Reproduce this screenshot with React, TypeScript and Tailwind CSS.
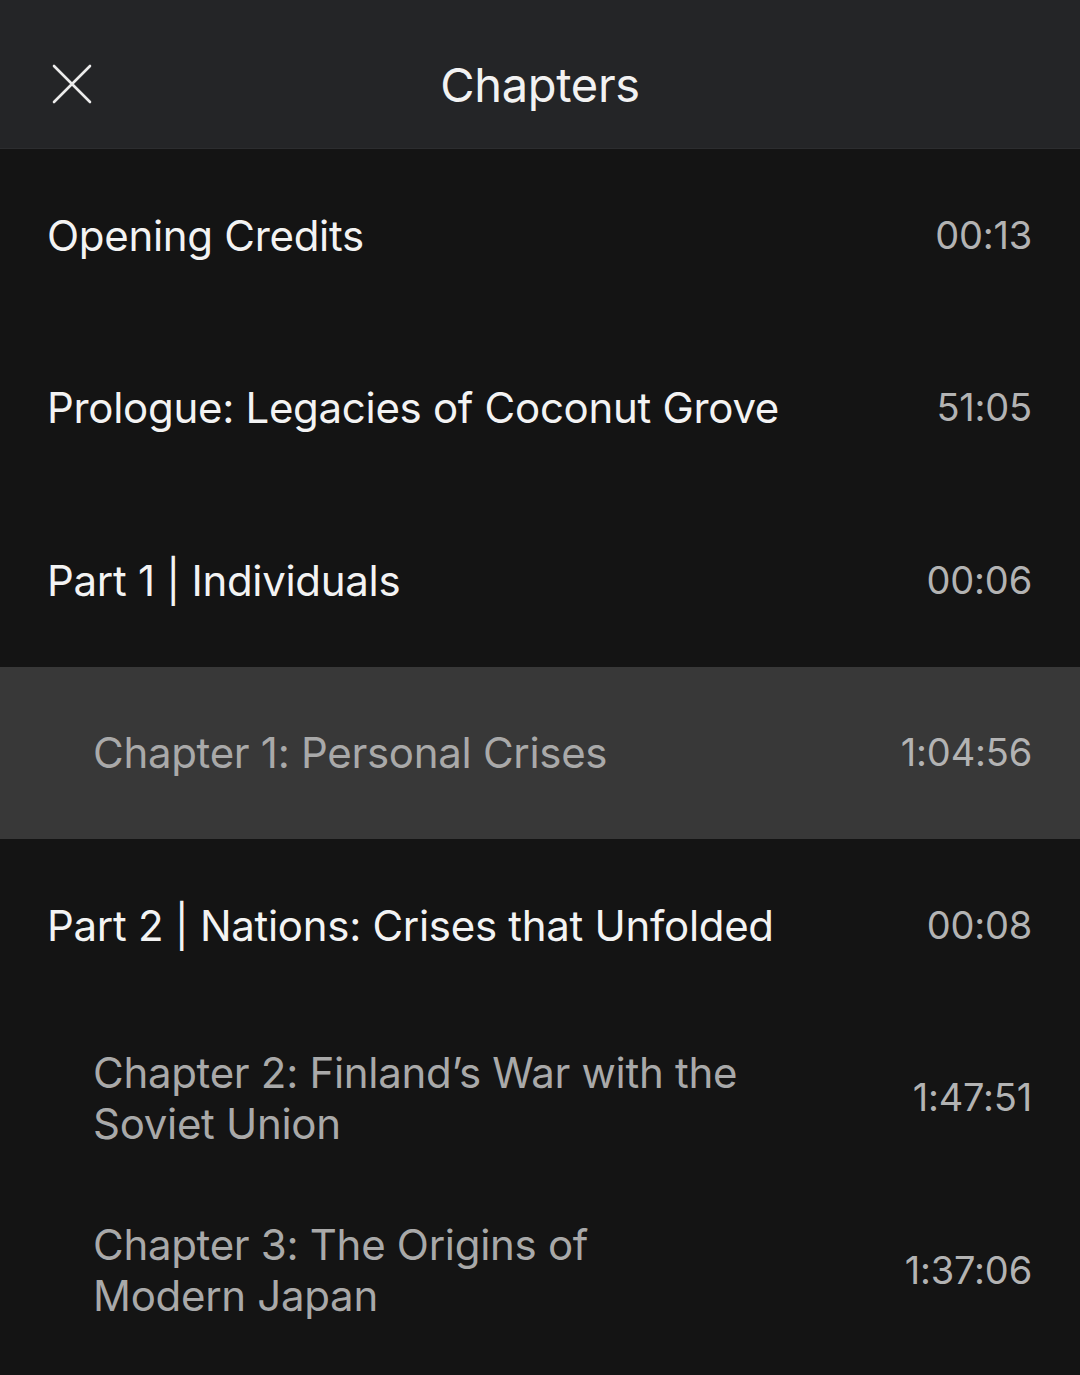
import React from "react";

const chapters = [
  { lines: ["Opening Credits"], time: "00:13", sub: false },
  { lines: ["Prologue: Legacies of Coconut Grove"], time: "51:05", sub: false },
  { lines: ["Part 1 | Individuals"], time: "00:06", sub: false },
  { lines: ["Chapter 1: Personal Crises"], time: "1:04:56", sub: true, active: true },
  { lines: ["Part 2 | Nations: Crises that Unfolded"], time: "00:08", sub: false },
  { lines: ["Chapter 2: Finland\u2019s War with the", "Soviet Union"], time: "1:47:51", sub: true },
  { lines: ["Chapter 3: The Origins of", "Modern Japan"], time: "1:37:06", sub: true },
];

export default function App() {
  return (
    <div className="w-[1080px] h-[1375px] bg-[#141414] overflow-hidden font-['Inter',sans-serif]">
      <header className="h-[149px] bg-[#242527] border-b border-[#2c2d2f] flex items-center relative">
        <button className="absolute left-[52px] top-[64px] w-[40px] h-[40px]">
          <svg viewBox="0 0 40 40" width="40" height="40" fill="none" stroke="#ececec" strokeWidth="2.6" strokeLinecap="round">
            <path d="M2 2 L38 38 M38 2 L2 38" />
          </svg>
        </button>
        <h1 className="w-full text-center text-[47px] text-[#f2f2f2] tracking-[-0.3px] leading-none mt-[20px]">Chapters</h1>
      </header>

      <ul>
        {chapters.map((c, i) => (
          <li
            key={i}
            className={`h-[172.5px] flex items-center justify-between pr-[48px] ${c.sub ? "pl-[93px]" : "pl-[47px]"} ${c.active ? "bg-[#383838]" : ""}`}
          >
            <span
              className={`text-[42px] leading-[51px] tracking-[-0.3px] ${c.sub ? "text-[#a9a9a9]" : "text-[#f3f3f3]"}`}
            >
              {c.lines.map((l, j) => (
                <span key={j} className="block">{l}</span>
              ))}
            </span>
            <span className="text-[38px] text-[#b3b3b3] tracking-[-0.2px] shrink-0">{c.time}</span>
          </li>
        ))}
      </ul>
    </div>
  );
}
